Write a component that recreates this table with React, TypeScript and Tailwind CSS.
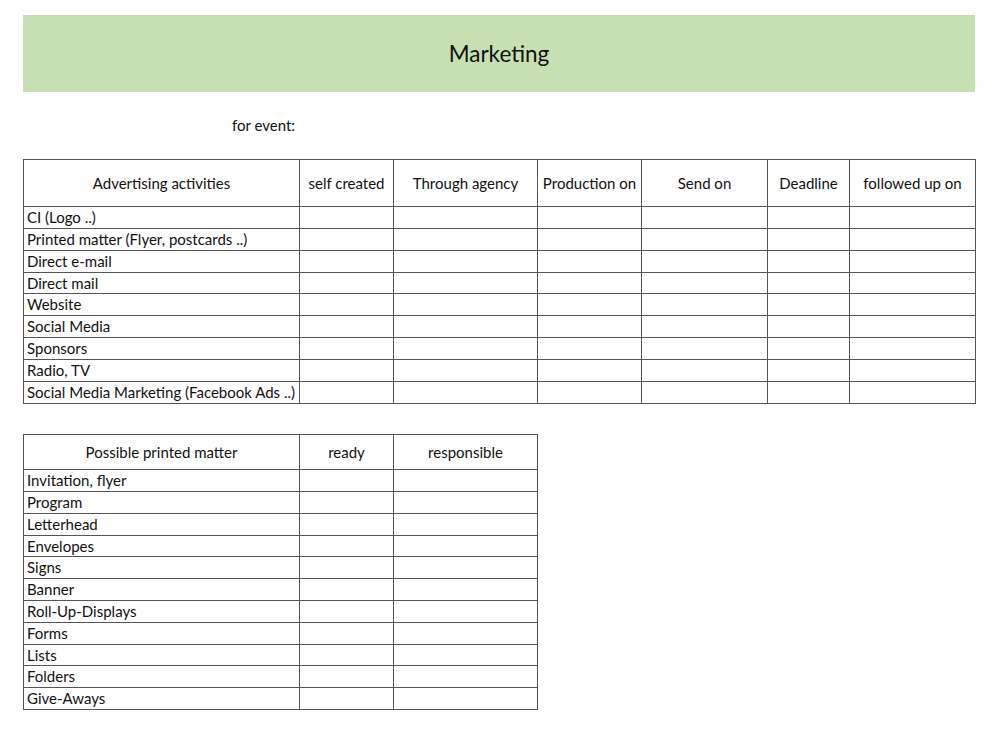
const activities = [
  "CI (Logo ..)",
  "Printed matter (Flyer, postcards ..)",
  "Direct e-mail",
  "Direct mail",
  "Website",
  "Social Media",
  "Sponsors",
  "Radio, TV",
  "Social Media Marketing (Facebook Ads ..)",
];

const printed = [
  "Invitation, flyer",
  "Program",
  "Letterhead",
  "Envelopes",
  "Signs",
  "Banner",
  "Roll-Up-Displays",
  "Forms",
  "Lists",
  "Folders",
  "Give-Aways",
];

const headCols = [
  { label: "Advertising activities", w: "w-[276px]" },
  { label: "self created", w: "w-[94px]" },
  { label: "Through agency", w: "w-[144px]" },
  { label: "Production on", w: "w-[104px]" },
  { label: "Send on", w: "w-[126px]" },
  { label: "Deadline", w: "w-[82px]" },
  { label: "followed up on", w: "w-[126px]" },
];

const printedCols = [
  { label: "Possible printed matter", w: "w-[276px]" },
  { label: "ready", w: "w-[94px]" },
  { label: "responsible", w: "w-[144px]" },
];

function Sheet({
  cols,
  rows,
  headH,
  shortRows,
}: {
  cols: { label: string; w: string }[];
  rows: string[];
  headH: string;
  shortRows: number[];
}) {
  return (
    <table className="table-fixed border-collapse text-[15px] text-[#111]">
      <thead>
        <tr className={headH}>
          {cols.map((c) => (
            <th
              key={c.label}
              className={`${c.w} border border-[#555] font-normal text-center p-0`}
            >
              {c.label}
            </th>
          ))}
        </tr>
      </thead>
      <tbody>
        {rows.map((r, i) => (
          <tr key={r} className={shortRows.includes(i) ? "h-[21px]" : "h-[22px]"}>
            <td className="border border-[#555] pl-[3px] py-0 leading-[19px] whitespace-nowrap">
              {r}
            </td>
            {cols.slice(1).map((c) => (
              <td key={c.label} className="border border-[#555]" />
            ))}
          </tr>
        ))}
      </tbody>
    </table>
  );
}

export default function App() {
  return (
    <div className="w-[1000px] h-[730px] bg-white pl-[23px] pt-[15px] font-['Lato','Open_Sans',sans-serif]">
      <div className="w-[952px] h-[77px] bg-[#c6e0b4] flex items-center justify-center text-[22.5px] text-[#111]">
        Marketing
      </div>
      <div className="h-[67px] pl-[209px] pt-[22px] text-[15px] text-[#111]">
        for event:
      </div>
      <Sheet cols={headCols} rows={activities} headH="h-[47px]" shortRows={[3]} />
      <div className="h-[30px]" />
      <Sheet cols={printedCols} rows={printed} headH="h-[35px]" shortRows={[3, 8]} />
    </div>
  );
}
